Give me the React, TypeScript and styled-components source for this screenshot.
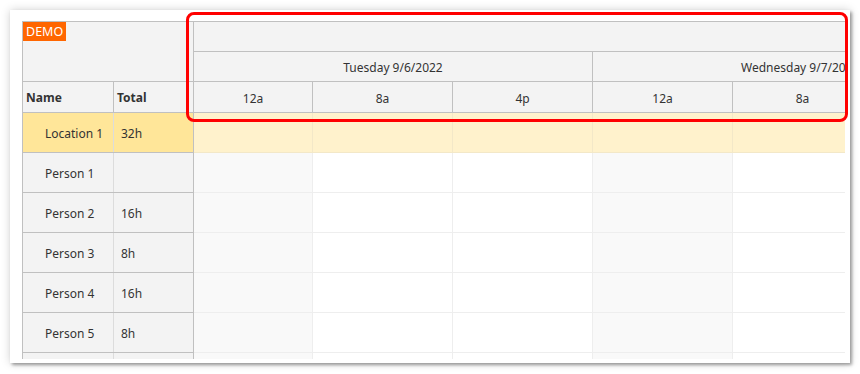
import React from "react";
import styled, { createGlobalStyle } from "styled-components";

const Global = createGlobalStyle`
  html, body { margin: 0; padding: 0; background: #ffffff; }
  body { font-family: "Noto Sans", "Segoe UI", sans-serif; font-size: 12px; color: #333333; }
  * { box-sizing: border-box; }
`;

const Page = styled.div`
  position: relative;
  width: 860px;
  height: 374px;
  padding: 10px;
`;

const Panel = styled.div`
  width: 840px;
  height: 353px;
  background: #ffffff;
  padding: 11px 0 0 12px;
  box-shadow: 2px 2px 3px rgba(0, 0, 0, 0.35), 0 0 9px rgba(0, 0, 0, 0.18);
`;

const Scheduler = styled.div`
  display: flex;
  align-items: flex-start;
  width: 823px;
  height: 338px;
  overflow: hidden;
  border-top: 1px solid #c0c0c0;
  border-left: 1px solid #c0c0c0;
`;

const RowHeader = styled.div`
  flex: 0 0 171px;
  display: flex;
  flex-direction: column;
  border-right: 1px solid #c0c0c0;
  background: #f3f3f3;
`;

const Corner = styled.div`
  flex: 0 0 60px;
  height: 60px;
  border-bottom: 1px solid #c0c0c0;
`;

const Demo = styled.span`
  display: inline-block;
  background: #ff6600;
  color: #ffffff;
  font-size: 12.5px;
  line-height: 19px;
  padding: 0 3px;
`;

const ColumnsRow = styled.div`
  display: grid;
  grid-template-columns: 91px 79px;
  flex: 0 0 31px;
  height: 31px;
  border-bottom: 1px solid #c0c0c0;
`;

const ColumnTitle = styled.div<{ $last?: boolean }>`
  display: flex;
  align-items: center;
  padding-left: 3px;
  font-weight: bold;
  border-right: ${(p) => (p.$last ? "none" : "1px solid #c0c0c0")};
`;

const ResourceRow = styled.div<{ $parent?: boolean }>`
  display: grid;
  grid-template-columns: 91px 79px;
  height: 40px;
  flex: 0 0 40px;
  border-bottom: 1px solid #c0c0c0;
  background: ${(p) => (p.$parent ? "#ffe699" : "#f3f3f3")};
`;

const ResourceCell = styled.div<{ $first?: boolean }>`
  display: flex;
  align-items: center;
  padding-top: 2px;
  padding-left: ${(p) => (p.$first ? "22px" : "7px")};
  border-right: ${(p) => (p.$first ? "1px solid #dcdcdc" : "none")};
`;

const Timeline = styled.div`
  flex: 1;
  display: flex;
  flex-direction: column;
  overflow: hidden;
`;

const HeaderLine = styled.div<{ $h: number }>`
  display: flex;
  height: ${(p) => p.$h}px;
  flex: 0 0 ${(p) => p.$h}px;
  background: #f3f3f3;
  border-bottom: 1px solid #c0c0c0;
`;

const HeaderCell = styled.div<{ $w: number }>`
  flex: 0 0 ${(p) => p.$w}px;
  display: flex;
  align-items: center;
  justify-content: center;
  padding-top: 2px;
  white-space: nowrap;
  border-right: 1px solid #c0c0c0;
`;

const DayCell = styled(HeaderCell)`
  justify-content: flex-start;
`;

const DayText = styled.span<{ $pad: number }>`
  padding-left: ${(p) => p.$pad}px;
`;

const GridRow = styled.div<{ $parent?: boolean }>`
  display: flex;
  height: 40px;
  flex: 0 0 40px;
  border-bottom: 1px solid ${(p) => (p.$parent ? "#f3e8c8" : "#eeeeee")};
`;

const GridCell = styled.div<{ $w: number; $off?: boolean; $parent?: boolean }>`
  flex: 0 0 ${(p) => p.$w}px;
  background: ${(p) => (p.$parent ? "#fff2cc" : p.$off ? "#f9f9f9" : "#ffffff")};
  border-right: 1px solid ${(p) => (p.$parent ? "#f3e8c8" : "#eeeeee")};
`;

const Highlight = styled.div`
  position: absolute;
  left: 186px;
  top: 12px;
  width: 662px;
  height: 110px;
  border: 3px solid #ff0000;
  border-radius: 8px;
  pointer-events: none;
`;

const cells = [
  { label: "12a", w: 119, off: true },
  { label: "8a", w: 140, off: false },
  { label: "4p", w: 140, off: false },
  { label: "12a", w: 140, off: true },
  { label: "8a", w: 140, off: false },
];

const resources = [
  { name: "Location 1", total: "32h", parent: true },
  { name: "Person 1", total: "" },
  { name: "Person 2", total: "16h" },
  { name: "Person 3", total: "8h" },
  { name: "Person 4", total: "16h" },
  { name: "Person 5", total: "8h" },
  { name: "", total: "" },
];

export default function App() {
  return (
    <Page>
      <Global />
      <Panel>
        <Scheduler>
          <RowHeader>
            <Corner>
              <Demo>DEMO</Demo>
            </Corner>
            <ColumnsRow>
              <ColumnTitle>Name</ColumnTitle>
              <ColumnTitle $last>Total</ColumnTitle>
            </ColumnsRow>
            {resources.map((r, i) => (
              <ResourceRow key={i} $parent={r.parent}>
                <ResourceCell $first>{r.name}</ResourceCell>
                <ResourceCell>{r.total}</ResourceCell>
              </ResourceRow>
            ))}
          </RowHeader>
          <Timeline>
            <HeaderLine $h={30} />
            <HeaderLine $h={30}>
              <HeaderCell $w={399}>Tuesday 9/6/2022</HeaderCell>
              <DayCell $w={420}>
                <DayText $pad={148}>Wednesday 9/7/2022</DayText>
              </DayCell>
            </HeaderLine>
            <HeaderLine $h={31}>
              {cells.map((c, i) => (
                <HeaderCell key={i} $w={c.w}>
                  {c.label}
                </HeaderCell>
              ))}
            </HeaderLine>
            {resources.map((r, i) => (
              <GridRow key={i} $parent={r.parent}>
                {cells.map((c, j) => (
                  <GridCell key={j} $w={c.w} $off={c.off} $parent={r.parent} />
                ))}
              </GridRow>
            ))}
          </Timeline>
        </Scheduler>
      </Panel>
      <Highlight />
    </Page>
  );
}
